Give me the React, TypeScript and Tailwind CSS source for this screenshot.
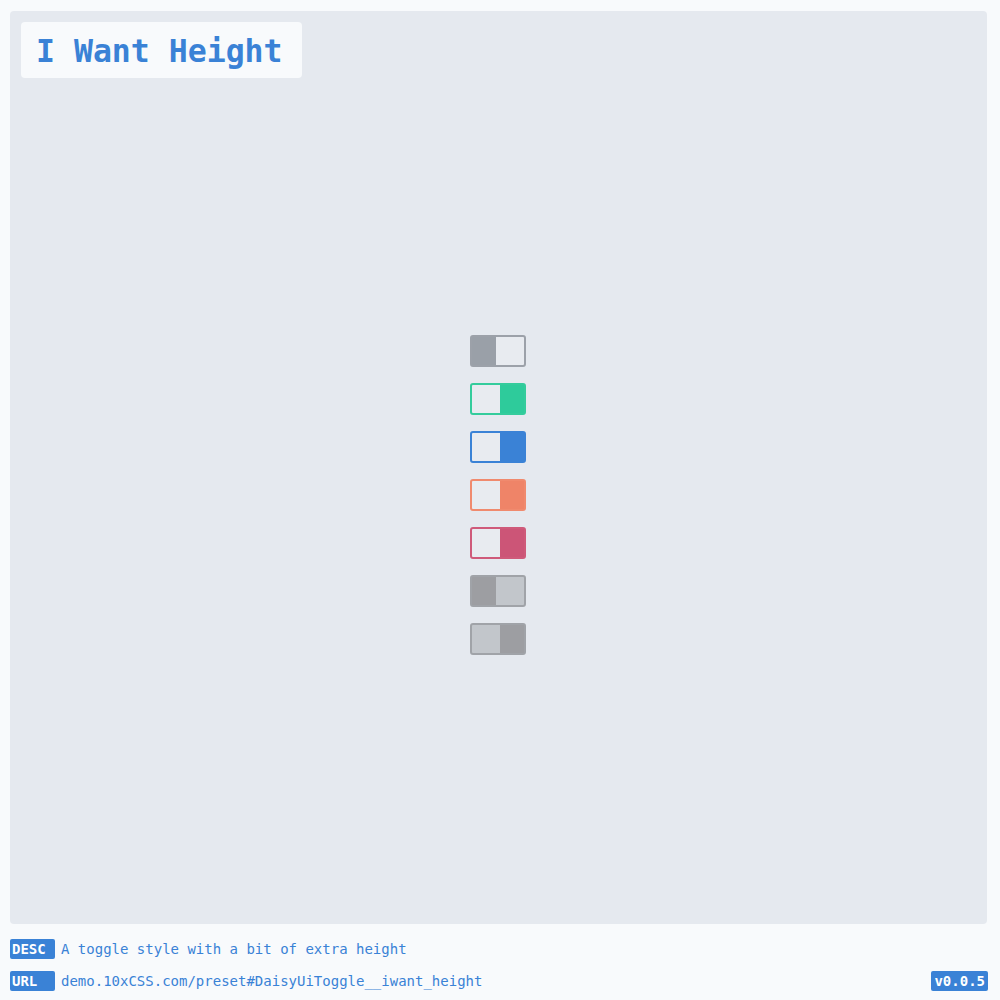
const mono = { fontFamily: '"DejaVu Sans Mono", "Liberation Mono", monospace' };

type Tone = { border: string; knob: string; track: string; on: boolean };

const toggles: Tone[] = [
  { border: 'border-[#9ca1a9]', knob: 'bg-[#9aa0a8]', track: 'bg-[#e8ebf0]', on: false },
  { border: 'border-[#34cc9c]', knob: 'bg-[#2ecb9b]', track: 'bg-[#e8ebf0]', on: true },
  { border: 'border-[#3a82d6]', knob: 'bg-[#3a82d6]', track: 'bg-[#e8ebf0]', on: true },
  { border: 'border-[#f08a6e]', knob: 'bg-[#ef8468]', track: 'bg-[#e8ebf0]', on: true },
  { border: 'border-[#cf5a7a]', knob: 'bg-[#cc5577]', track: 'bg-[#e8ebf0]', on: true },
  { border: 'border-[#a0a3a8]', knob: 'bg-[#9d9ea2]', track: 'bg-[#c2c6cb]', on: false },
  { border: 'border-[#a0a3a8]', knob: 'bg-[#9d9ea2]', track: 'bg-[#c2c6cb]', on: true },
];

function Toggle({ t }: { t: Tone }) {
  return (
    <div className={`w-[56px] h-[32px] border-2 rounded-[3px] flex ${t.border} ${t.track} ${t.on ? 'justify-end' : 'justify-start'}`}>
      <div className={`w-[24px] h-full ${t.knob}`} />
    </div>
  );
}

export default function App() {
  return (
    <div className="w-[1000px] h-[1000px] bg-[#f8fafc] flex flex-col" style={mono}>
      <div className="mt-[11px] ml-[10px] w-[977px] h-[913px] bg-[#e5e9ef] rounded-[4px] relative flex items-center justify-center">
        <div className="absolute left-[11px] top-[11px] w-[281px] h-[56px] bg-[#f8fafc] rounded-[4px] flex items-center pl-[15px] pt-[3px]">
          <span className="text-[31.5px] font-bold text-[#3a82d6] leading-none">I Want Height</span>
        </div>
        <div className="flex flex-col gap-[16px] mt-[54px] -ml-[1px]">
          {toggles.map((t, i) => (
            <Toggle key={i} t={t} />
          ))}
        </div>
      </div>
      <div className="mt-[15px] ml-[10px] flex items-center h-[20px] text-[14px]">
        <span className="bg-[#3a82d6] text-white font-bold w-[45px] h-[20px] pl-[2px] leading-[20px] rounded-[2px]">DESC</span>
        <span className="ml-[6px] text-[#3a82d6] text-[14px]">A toggle style with a bit of extra height</span>
      </div>
      <div className="mt-[12px] ml-[10px] mr-[12px] flex items-center h-[20px] text-[14px]">
        <span className="bg-[#3a82d6] text-white font-bold w-[45px] h-[20px] pl-[2px] leading-[20px] rounded-[2px]">URL</span>
        <span className="ml-[6px] text-[#3a82d6] text-[14px]">demo.10xCSS.com/preset#DaisyUiToggle__iwant_height</span>
        <span className="ml-auto bg-[#3a82d6] text-white font-bold h-[20px] px-[3px] leading-[20px] rounded-[2px]">v0.0.5</span>
      </div>
    </div>
  );
}
